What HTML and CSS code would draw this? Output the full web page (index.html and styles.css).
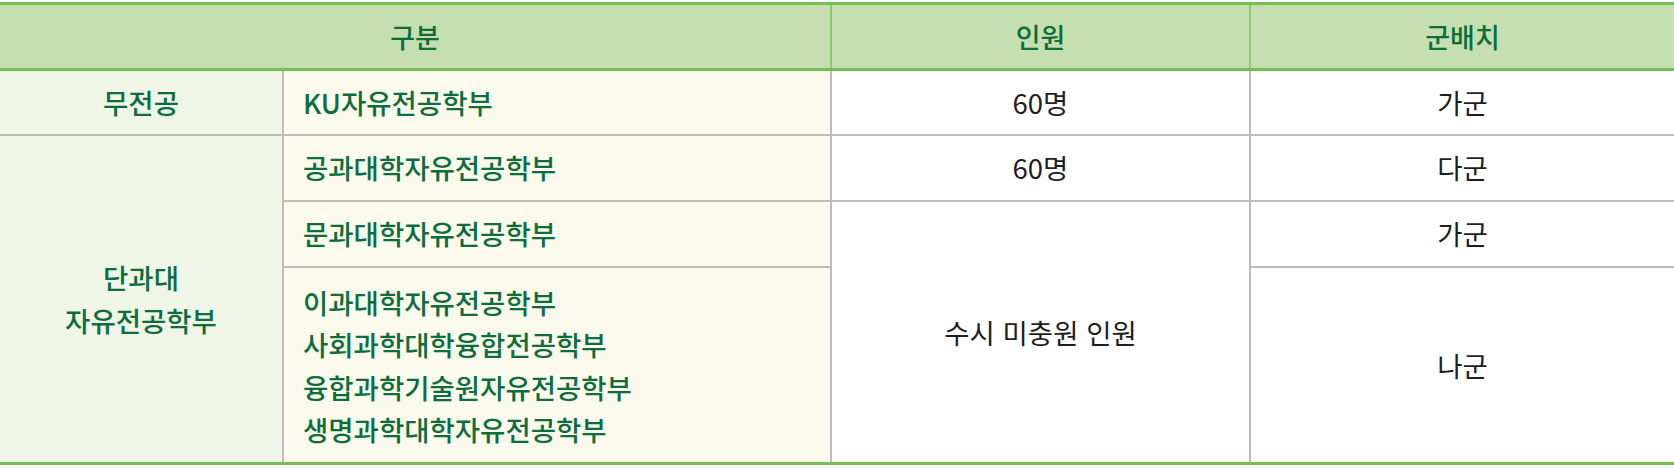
FILE: index.html
```html
<!DOCTYPE html>
<html lang="ko">
<head>
<meta charset="utf-8">
<link rel="stylesheet" href="styles.css">
</head>
<body>
<table class="tbl">
  <colgroup>
    <col class="c1"><col class="c2"><col class="c3"><col class="c4">
  </colgroup>
  <thead>
    <tr class="head">
      <th colspan="2">구분</th>
      <th>인원</th>
      <th>군배치</th>
    </tr>
  </thead>
  <tbody>
    <tr class="row">
      <td class="cat">무전공</td>
      <td class="dept">KU자유전공학부</td>
      <td class="val">60명</td>
      <td class="val">가군</td>
    </tr>
    <tr class="row mid">
      <td class="cat" rowspan="3">단과대<br>자유전공학부</td>
      <td class="dept">공과대학자유전공학부</td>
      <td class="val">60명</td>
      <td class="val">다군</td>
    </tr>
    <tr class="row mid">
      <td class="dept">문과대학자유전공학부</td>
      <td class="val" rowspan="2">수시 미충원 인원</td>
      <td class="val">가군</td>
    </tr>
    <tr class="row tall">
      <td class="dept">이과대학자유전공학부<br>사회과학대학융합전공학부<br>융합과학기술원자유전공학부<br>생명과학대학자유전공학부</td>
      <td class="val">나군</td>
    </tr>
  </tbody>
</table>
</body>
</html>
```

FILE: styles.css
```css
html, body {
  margin: 0;
  padding: 0;
  background: #ffffff;
}
body {
  padding-top: 2px;
  font-family: "Noto Sans CJK KR", "Noto Sans", sans-serif;
}
.tbl {
  width: 1674px;
  border-collapse: collapse;
  table-layout: fixed;
  border-top: 3px solid #74bf4f;
  border-bottom: 3px solid #74bf4f;
}
.c1 { width: 283px; }
.c2 { width: 548px; }
.c3 { width: 419px; }
.c4 { width: 424px; }

.head { height: 66px; }
.head th {
  padding: 0;
  background: #c6dfb0;
  color: #0b6e3c;
  font-size: 27px;
  font-weight: 500;
  text-align: center;
  vertical-align: middle;
  border-left: 2px solid #8fca6e;
  border-bottom: 3px solid #74bf4f;
}
.head th:first-child { border-left: none; }

.row { height: 65px; }
.row.mid { height: 66px; }
.row.tall { height: 197px; }
.row td {
  padding: 0;
  font-size: 27.5px;
  line-height: 42.5px;
  vertical-align: middle;
  border: 2px solid #bcbcbc;
}
.row td:first-child { border-left: none; }
.row td:last-child { border-right: none; }
.tall .dept { padding-top: 2px !important; }

.cat {
  background: #eff5e7;
  color: #0b6e3c;
  font-weight: 500;
  text-align: center;
}
.dept {
  background: #fcfaec;
  color: #0b6e3c;
  font-weight: 500;
  text-align: left;
  padding-left: 19px !important;
}
.val {
  background: #ffffff;
  color: #1e1e1e;
  font-weight: 400;
  text-align: center;
}
```
